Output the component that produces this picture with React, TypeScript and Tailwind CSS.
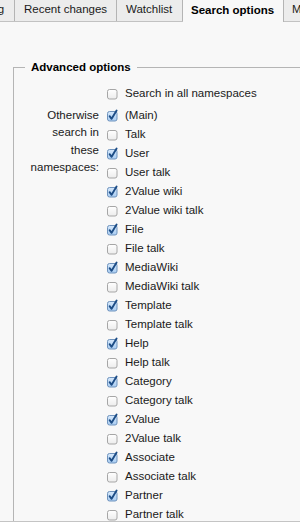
import React from "react";

const items: [string, boolean][] = [
  ["(Main)", true],
  ["Talk", false],
  ["User", true],
  ["User talk", false],
  ["2Value wiki", true],
  ["2Value wiki talk", false],
  ["File", true],
  ["File talk", false],
  ["MediaWiki", true],
  ["MediaWiki talk", false],
  ["Template", true],
  ["Template talk", false],
  ["Help", true],
  ["Help talk", false],
  ["Category", true],
  ["Category talk", false],
  ["2Value", true],
  ["2Value talk", false],
  ["Associate", true],
  ["Associate talk", false],
  ["Partner", true],
  ["Partner talk", false],
];

function Box({ checked }: { checked: boolean }) {
  return (
    <svg width="12" height="12" viewBox="0 0 12 12" className="shrink-0 overflow-visible">
      <defs>
        <linearGradient id="ub" x1="0" y1="0" x2="0" y2="1">
          <stop offset="0" stopColor="#ffffff" />
          <stop offset="1" stopColor="#ececec" />
        </linearGradient>
        <linearGradient id="cb" x1="0" y1="0" x2="0" y2="1">
          <stop offset="0" stopColor="#d6e8fb" />
          <stop offset="1" stopColor="#a9cdf2" />
        </linearGradient>
      </defs>
      <rect
        x="1.5"
        y="1.5"
        width="9.5"
        height="9.5"
        rx="2"
        fill={checked ? "url(#cb)" : "url(#ub)"}
        stroke={checked ? "#6f93bd" : "#a6a6a6"}
        strokeWidth="1"
      />
      {checked && (
        <path
          d="M3.6 6.2 L5.6 8.8 L10.6 0.6"
          fill="none"
          stroke="#1d4d86"
          strokeWidth="1.9"
          strokeLinecap="round"
          strokeLinejoin="round"
        />
      )}
    </svg>
  );
}

function Row({ label, checked }: { label: string; checked: boolean }) {
  return (
    <div className="flex h-[19px] items-center gap-[7px] whitespace-nowrap">
      <Box checked={checked} />
      <span>{label}</span>
    </div>
  );
}

export default function App() {
  return (
    <div className="h-[522px] w-[300px] overflow-hidden border-b border-[#c4c4c4] bg-[#f8f8f8] font-['Liberation_Sans',Arial,sans-serif] text-[11.5px] text-[#1a1a1a]">
      <div className="flex h-[22px] border-b border-[#c2c2c2] bg-[#ececec] whitespace-nowrap">
        <div className="ml-[-40px] w-[55px] shrink-0 border-r border-[#b4b4b4] pt-[2px] pl-[9px] leading-[14px]">Editing</div>
        <div className="w-[102px] shrink-0 border-r border-[#b4b4b4] pt-[2px] pl-[9px] leading-[14px]">Recent changes</div>
        <div className="w-[66px] shrink-0 border-r border-[#b4b4b4] pt-[2px] pl-[9px] leading-[14px]">Watchlist</div>
        <div className="mb-[-1px] w-[101px] shrink-0 border-r border-[#b4b4b4] bg-[#f8f8f8] pt-[3px] pl-[8px] font-bold leading-[14px] text-black">Search options</div>
        <div className="shrink-0 pt-[2px] pl-[8px] leading-[14px]">Misc</div>
      </div>
      <fieldset className="mt-[38px] mr-[-60px] ml-[13px] border-t border-l border-r-0 border-b-0 border-[#b5b5b5] pl-[11px]">
        <legend className="px-[6px] font-bold leading-[14px] text-black">Advanced options</legend>
        <div className="pt-[10px]">
          <div className="flex">
            <div className="w-[81px] shrink-0" />
            <Row label="Search in all namespaces" checked={false} />
          </div>
          <div className="mt-[3px] flex">
            <div className="w-[74px] shrink-0 pt-[1px] text-right leading-[17.3px]">
              Otherwise search in these namespaces:
            </div>
            <div className="ml-[7px] flex flex-col">
              {items.map(([l, c]) => (
                <Row key={l} label={l} checked={c} />
              ))}
            </div>
          </div>
        </div>
      </fieldset>
    </div>
  );
}
